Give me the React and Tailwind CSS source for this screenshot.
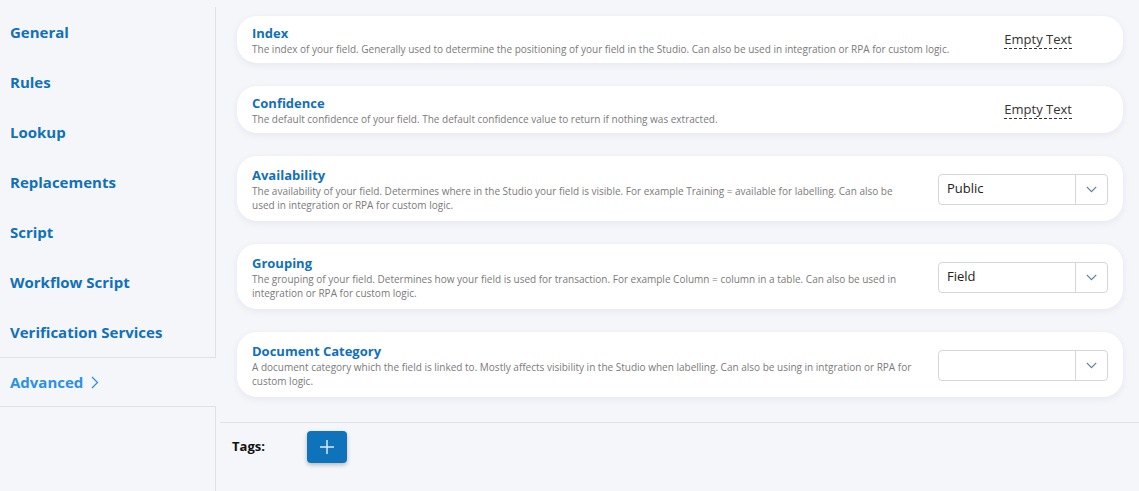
import React from "react";

const navItems = [
  "General",
  "Rules",
  "Lookup",
  "Replacements",
  "Script",
  "Workflow Script",
  "Verification Services",
];

function Chevron() {
  return (
    <svg width="11" height="7" viewBox="0 0 11 7" fill="none">
      <path d="M0.8 0.8 L5.5 5.6 L10.2 0.8" stroke="#5f7f9f" strokeWidth="1.2" />
    </svg>
  );
}

function Select({ value }) {
  return (
    <div className="flex h-[31px] w-[170px] shrink-0 items-stretch rounded-[4px] border border-[#d3d7dd] bg-white">
      <div className="flex flex-1 items-center pl-[8px] text-[13px] text-[#222]">{value}</div>
      <div className="flex w-[32px] items-center justify-center border-l border-[#d3d7dd]">
        <Chevron />
      </div>
    </div>
  );
}

function Card({ title, desc, control, twoLine }) {
  return (
    <div
      className={
        "flex items-center rounded-[20px] bg-white pl-[15px] shadow-[0_2px_7px_rgba(30,40,80,0.07)] " +
        (twoLine ? "pt-[10px] pb-[9px] pr-[15px]" : "pt-[8px] pb-[7px] pr-[51px]")
      }
    >
      <div className={"flex-1 " + (twoLine ? "mr-[26px]" : "")}>
        <div className="h-[18px] text-[13px] font-bold leading-[18px] text-[#1170ba]">{title}</div>
        <div className="whitespace-normal text-[10px] leading-[14px] text-[#7a7a7a]">{desc}</div>
      </div>
      {control}
    </div>
  );
}

function EmptyText() {
  return (
    <span className="shrink-0 border-b border-dashed border-[#333] text-[13px] leading-[17px] text-[#333]">
      Empty Text
    </span>
  );
}

export default function App() {
  return (
    <div
      className="flex h-[491px] w-full bg-[#f5f6fa]"
      style={{ fontFamily: '"Open Sans", "Noto Sans", sans-serif' }}
    >
      {/* Sidebar */}
      <div className="flex w-[216px] flex-col pt-[7px]">
        <div className="flex flex-col border-r border-[#dfe1e6]">
          {navItems.map((item, i) => (
            <div
              key={item}
              className={
                "flex h-[50px] items-center pl-[10px] text-[15px] font-bold text-[#1170ba] " +
                (i === 0 ? "pt-[1px]" : "")
              }
            >
              {item}
            </div>
          ))}
        </div>
        <div className="flex h-[50px] items-center gap-[8px] border-y border-[#dfe1e6] pl-[10px] text-[15px] font-bold text-[#2b90e8]">
          Advanced
          <svg width="8" height="13" viewBox="0 0 8 13" fill="none">
            <path d="M1 1 L6.5 6.5 L1 12" stroke="#2b90e8" strokeWidth="1.3" />
          </svg>
        </div>
        <div className="flex-1 border-r border-[#dfe1e6]" />
      </div>

      {/* Main */}
      <div className="flex flex-1 flex-col pl-[4px]">
        <div className="flex flex-col gap-[23px] pl-[17px] pr-[16px] pt-[16px] pb-[25px]">
          <Card
            title="Index"
            desc="The index of your field. Generally used to determine the positioning of your field in the Studio. Can also be used in integration or RPA for custom logic."
            control={<EmptyText />}
          />
          <Card
            title="Confidence"
            desc="The default confidence of your field. The default confidence value to return if nothing was extracted."
            control={<EmptyText />}
          />
          <Card
            twoLine
            title="Availability"
            desc="The availability of your field. Determines where in the Studio your field is visible. For example Training = available for labelling. Can also be used in integration or RPA for custom logic."
            control={<Select value="Public" />}
          />
          <Card
            twoLine
            title="Grouping"
            desc="The grouping of your field. Determines how your field is used for transaction. For example Column = column in a table. Can also be used in integration or RPA for custom logic."
            control={<Select value="Field" />}
          />
          <Card
            twoLine
            title="Document Category"
            desc="A document category which the field is linked to. Mostly affects visibility in the Studio when labelling. Can also be using in intgration or RPA for custom logic."
            control={<Select value="" />}
          />
        </div>
        <div className="flex items-center border-t border-[#dfe1e6] pl-[12px] pt-[8px]">
          <span className="w-[75px] text-[13px] font-bold text-[#111]">Tags:</span>
          <button className="flex h-[32px] w-[40px] items-center justify-center rounded-[4px] bg-[#0f73bb] shadow-[0_2px_4px_rgba(0,0,0,0.25)]">
            <svg width="16" height="16" viewBox="0 0 16 16" fill="none">
              <path d="M8 1 V15 M1 8 H15" stroke="#d8ecfa" strokeWidth="1.5" />
            </svg>
          </button>
        </div>
      </div>
    </div>
  );
}
